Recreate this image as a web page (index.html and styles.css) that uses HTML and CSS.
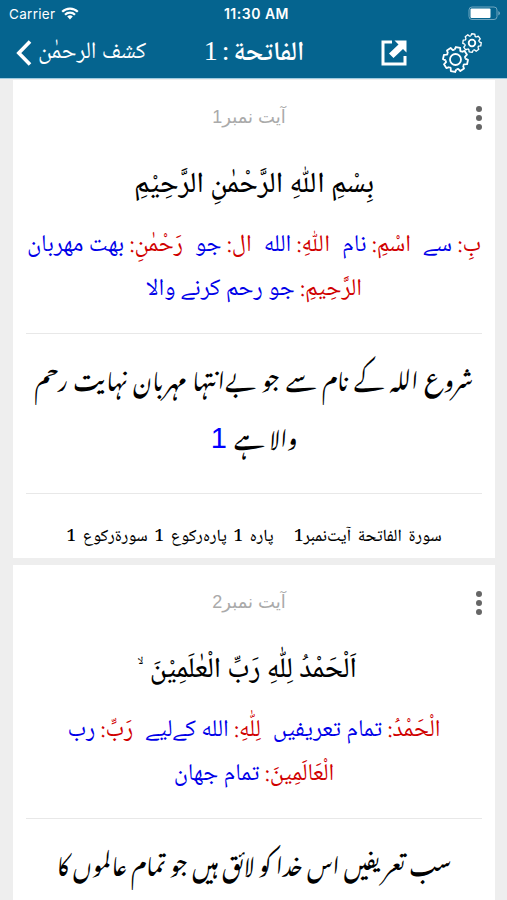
FILE: index.html
```html
<!DOCTYPE html>
<html lang="ur">
<head>
  <meta charset="utf-8">
  <title>الفاتحة</title>
  <link rel="stylesheet" href="styles.css">
</head>
<body>
  <div class="top">
    <div class="status">
      <div class="carrier">
        <span>Carrier</span>
        <svg width="18" height="13" viewBox="0 0 18 13" fill="none" stroke="#fff" stroke-width="2.2">
          <path d="M1.2 4.8a11 11 0 0 1 15.6 0M4 7.8a7 7 0 0 1 10 0"/>
          <path d="M6.2 9.6a4 4 0 0 1 5.6 0L9 12.4z" fill="#fff" stroke="none"/>
        </svg>
      </div>
      <div class="clock">11:30 AM</div>
      <div class="battery">
        <svg width="33" height="15" viewBox="0 0 33 15">
          <rect x="1" y="1" width="28" height="12.5" rx="3" fill="none" stroke="#6fa6c0" stroke-width="1"/>
          <rect x="2.5" y="2.5" width="20" height="9.5" rx="1" fill="#fff"/>
          <path d="M30.3 5v4.6q1.7-.8 1.7-2.3t-1.7-2.3" fill="#6fa6c0"/>
        </svg>
      </div>
    </div>
    <div class="navbar">
      <div class="back">
        <svg width="16" height="26" viewBox="0 0 16 26" fill="none" stroke="#fff" stroke-width="3.6">
          <path d="M14 1.5 2.8 13 14 24.5"/>
        </svg>
        <span class="back-text" dir="rtl">كشف الرحمٰن</span>
      </div>
      <div class="title" dir="rtl">الفاتحة<span class="title-num"> : 1</span></div>
      <div class="actions">
        <svg width="26" height="26" viewBox="0 0 26 26">
          <path d="M11 2H2v22h22V16" fill="none" stroke="#fff" stroke-width="3"/>
          <path d="M13.500 .5h12v12l-3.500-3.500-9.500 9-4.500-4.500 9.500-9z" fill="#fff"/>
        </svg>
        <svg width="42" height="42" viewBox="0 0 42 42" fill="none" stroke="#fff" stroke-width="1.8" stroke-linejoin="round">
          <defs>
            <path id="tooth" d="M9.400-2.900 12.300-2.200V2.200L9.400 2.900A9.800 9.800 0 0 1 8.700 4.600"/>
            <g id="gear">
              <use href="#tooth"/>
              <use href="#tooth" transform="rotate(45)"/>
              <use href="#tooth" transform="rotate(90)"/>
              <use href="#tooth" transform="rotate(135)"/>
              <use href="#tooth" transform="rotate(180)"/>
              <use href="#tooth" transform="rotate(225)"/>
              <use href="#tooth" transform="rotate(270)"/>
              <use href="#tooth" transform="rotate(315)"/>
            </g>
          </defs>
          <use href="#gear" transform="translate(14.500 27.500) rotate(12)"/>
          <circle cx="14.500" cy="27.500" r="5.500"/>
          <use href="#gear" transform="translate(31 11) rotate(8) scale(.74)"/>
          <circle cx="31" cy="11" r="3.300"/>
        </svg>
      </div>
    </div>
  </div>

  <div class="list">
    <div class="card">
      <div class="card-header">
        <div class="ayat-no" dir="rtl">آیت نمبر1</div>
        <div class="menu"><i></i><i></i><i></i></div>
      </div>
      <div class="verse" dir="rtl">بِسْمِ اللّٰهِ الرَّحْمٰنِ الرَّحِيْمِ</div>
      <div class="words" dir="rtl">
        <div class="line"><span><b>بِ:</b> سے</span> <span><b>اسْمِ:</b> نام</span> <span><b>اللّٰهِ:</b> الله</span> <span><b>ال:</b> جو</span> <span><b>رَحْمٰنِ:</b> بهت مهربان</span></div>
        <div class="line"><span><b>الرَّحِيمِ:</b> جو رحم کرنے والا</span></div>
      </div>
      <div class="translation" dir="rtl">
        <div class="line urdu-wide">شروع اللہ کے نام سے جو بےانتہا مہربان نہایت رحم</div>
        <div class="line last"><span>والا ہے</span> <span class="num">1</span></div>
      </div>
      <div class="info" dir="rtl">سورة الفاتحة آیت‌نمبر1 &nbsp; پاره 1 پاره‌رکوع 1 سورة‌رکوع 1</div>
    </div>

    <div class="card">
      <div class="card-header">
        <div class="ayat-no" dir="rtl">آیت نمبر2</div>
        <div class="menu"><i></i><i></i><i></i></div>
      </div>
      <div class="verse verse-2" dir="rtl">اَلْحَمْدُ لِلّٰهِ رَبِّ الْعٰلَمِيْنَ &nbsp;ۙ</div>
      <div class="words" dir="rtl">
        <div class="line"><span><b>الْحَمْدُ:</b> تمام تعریفیں</span> <span><b>لِلّٰهِ:</b> الله کےلیے</span> <span><b>رَبِّ:</b> رب</span></div>
        <div class="line"><span><b>الْعَالَمِينَ:</b> تمام جهان</span></div>
      </div>
      <div class="translation" dir="rtl">
        <div class="line">سب تعریفیں اس خدا کو لائق ہیں جو تمام عالموں کا</div>
      </div>
    </div>
  </div>
</body>
</html>
```

FILE: styles.css
```css
body {
  margin: 0;
  height: 900px;
  overflow: hidden;
  background: #eee;
  font-family: "Noto Naskh Arabic", "DejaVu Sans", sans-serif;
  color: #000;
}

.top {
  height: 79px;
  background: #05648f;
  color: #fff;
  border-bottom: 1px solid #9fcbe0;
  box-sizing: border-box;
}

.status {
  display: grid;
  grid-template-columns: 1fr auto 1fr;
  align-items: center;
  height: 27px;
  padding: 0 6px 0 9px;
  font-family: Inter, "Liberation Sans", sans-serif;
  font-size: 13.5px;
  letter-spacing: 0.3px;
}

.carrier {
  display: flex;
  align-items: center;
  gap: 6px;
}

.clock {
  margin-left: 3px;
  font-size: 14px;
  font-weight: 600;
  letter-spacing: 0.5px;
}

.battery {
  display: flex;
  justify-content: flex-end;
}

.navbar {
  display: grid;
  grid-template-columns: 1fr auto 1fr;
  align-items: center;
  height: 48px;
  padding: 0 24px 0 16px;
}

.back,
.actions {
  display: flex;
  align-items: center;
}

.back {
  gap: 6px;
}

.back-text {
  font-size: 23.5px;
  line-height: 48px;
  white-space: nowrap;
}

.title {
  margin-left: 9px;
  font-size: 27px;
  font-weight: 600;
  line-height: 48px;
  white-space: nowrap;
}

.title-num {
  font-family: "Liberation Serif", serif;
  font-weight: normal;
  font-size: 28px;
  word-spacing: -3px;
}

.actions {
  justify-content: flex-end;
  gap: 34px;
}

.list {
  height: 821px;
  overflow: hidden;
}

.card {
  height: 478px;
  margin: 0 12px 7px 13px;
  padding: 0 13px;
  background: #fff;
  overflow: hidden;
}

.card:first-child {
  margin-top: 1px;
}

.card-header {
  display: grid;
  grid-template-columns: 1fr auto 1fr;
  align-items: center;
  height: 75px;
}

.ayat-no {
  grid-column: 2;
  margin-right: 10px;
  padding-bottom: 2px;
  color: #aaa;
  font-family: "Liberation Sans", "DejaVu Sans", sans-serif;
  font-size: 18px;
}

.menu {
  display: flex;
  flex-direction: column;
  justify-self: end;
  gap: 3px;
}

.menu i {
  width: 6px;
  height: 6px;
  border-radius: 50%;
  background: #666;
}

.verse {
  height: 69px;
  line-height: 62px;
  font-size: 29px;
  font-weight: 500;
  text-align: center;
  white-space: nowrap;
}

.verse-2 {
  margin-right: 14px;
  font-size: 28.5px;
}

.words {
  height: 109px;
  border-bottom: 1px solid #e8e8e8;
  color: #0000e8;
  font-size: 24px;
  line-height: 44px;
}

.words b {
  color: #d00000;
  font-weight: normal;
}

.line {
  display: flex;
  justify-content: center;
  gap: 12px;
  white-space: nowrap;
}

.translation {
  height: 145px;
  padding-top: 14px;
  border-bottom: 1px solid #e8e8e8;
  font-family: "Noto Nastaliq Urdu", "DejaVu Sans", sans-serif;
  font-size: 22.3px;
  font-weight: 500;
  line-height: 58px;
  word-spacing: 1px;
}

.urdu-wide {
  word-spacing: 2.5px;
}

.last {
  gap: 7px;
}

.num {
  padding-top: 3px;
  color: #0000ff;
  font-family: "Liberation Sans", sans-serif;
  font-size: 29px;
}

.info {
  line-height: 87px;
  font-size: 17px;
  font-weight: 500;
  word-spacing: 3px;
  text-align: center;
  white-space: nowrap;
}
```
